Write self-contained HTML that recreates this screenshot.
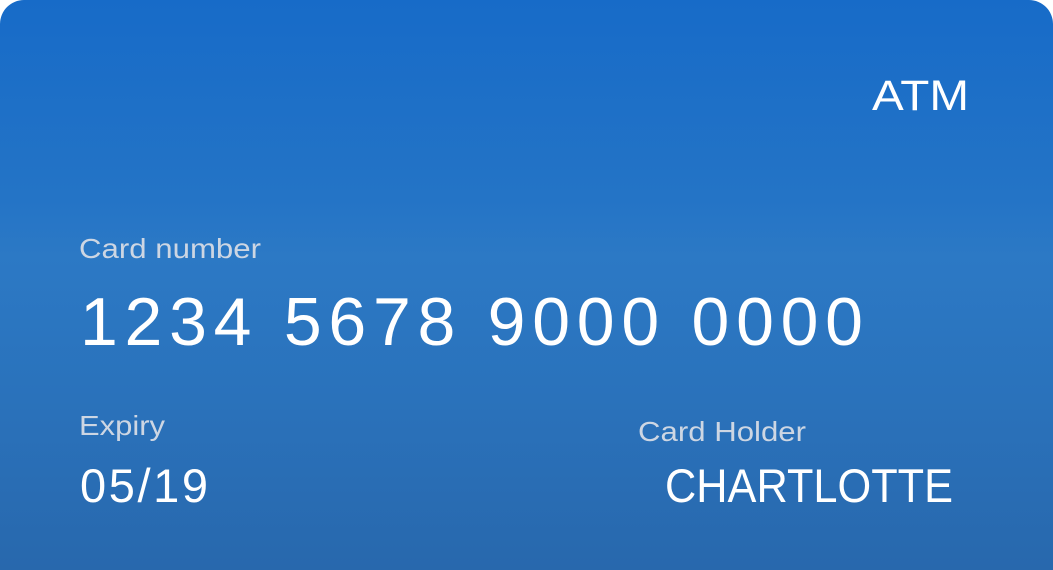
<!DOCTYPE html>
<html><head><meta charset="utf-8"><style>
html,body{margin:0;padding:0;background:#fff;}
.card{width:1053px;height:570px;border-radius:24px 24px 0 0;overflow:hidden;
background:linear-gradient(180deg,#176bc8 0%,#2474c6 35%,#2c79c5 45%,#2a72bb 70%,#2868ad 100%);}
svg{display:block}
</style></head><body>
<div class="card">
<svg width="1053" height="570" xmlns="http://www.w3.org/2000/svg" font-family="Liberation Sans, sans-serif">
<text x="872" y="110" font-size="43" fill="#fff" textLength="97" lengthAdjust="spacingAndGlyphs">ATM</text>
<text x="79" y="258" font-size="28" fill="#cdd6e3" textLength="182" lengthAdjust="spacingAndGlyphs">Card number</text>
<text x="80" y="345" font-size="68" fill="#fff" textLength="783" lengthAdjust="spacing">1234 5678 9000 0000</text>
<text x="79" y="435" font-size="28" fill="#cdd6e3" textLength="86" lengthAdjust="spacingAndGlyphs">Expiry</text>
<text x="638" y="441" font-size="28" fill="#cdd6e3" textLength="168" lengthAdjust="spacingAndGlyphs">Card Holder</text>
<text x="80" y="502" font-size="47" fill="#fff" textLength="128" lengthAdjust="spacing">05/19</text>
<text x="665" y="502" font-size="47" fill="#fff" textLength="288" lengthAdjust="spacingAndGlyphs">CHARTLOTTE</text>
</svg>
</div>
</body></html>
